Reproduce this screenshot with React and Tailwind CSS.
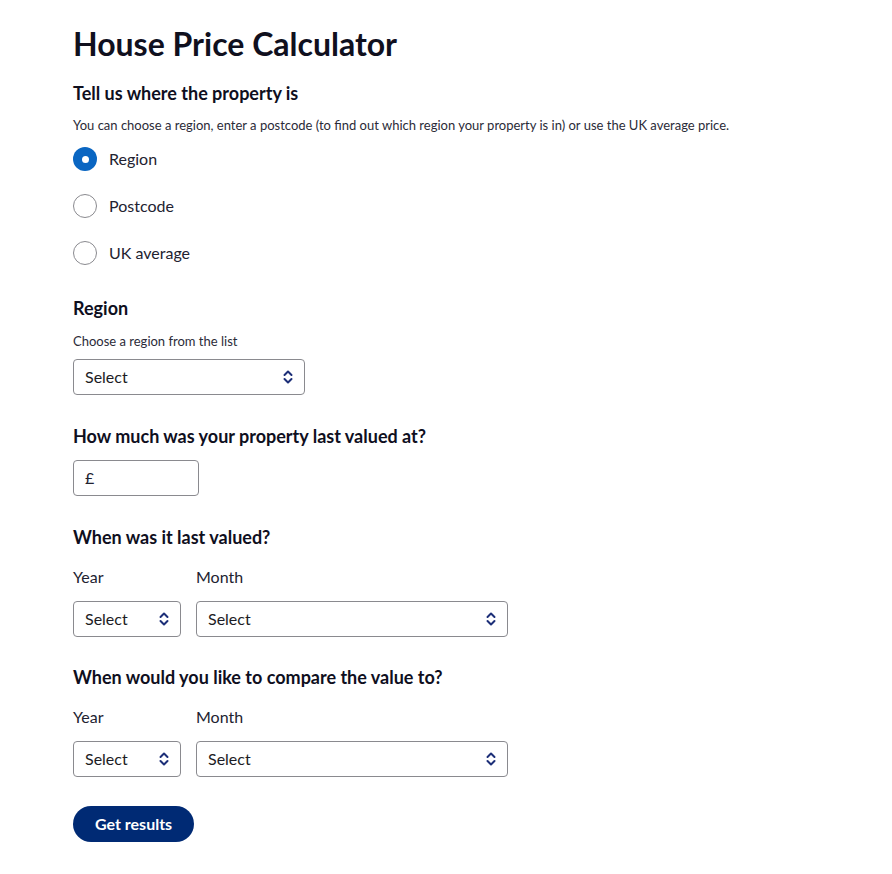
import React, { useState } from "react";

const Chevrons = () => (
  <svg width="12" height="16" viewBox="0 0 12 16" fill="none" className="shrink-0">
    <path d="M2.5 6L6 2.5L9.5 6" stroke="#1d2f78" strokeWidth="2" strokeLinecap="round" strokeLinejoin="round" />
    <path d="M2.5 10L6 13.5L9.5 10" stroke="#1d2f78" strokeWidth="2" strokeLinecap="round" strokeLinejoin="round" />
  </svg>
);

const SelectBox = ({ width }) => (
  <div
    className={`${width} h-9 flex items-center justify-between pl-[11px] pr-[10px] border border-[#8a8a8f] rounded-[4px] bg-white text-[16px] text-[#1c1c24]`}
  >
    <span>Select</span>
    <Chevrons />
  </div>
);

const Radio = ({ label, checked, onClick }) => (
  <button onClick={onClick} className="flex items-center gap-3 h-6 text-[16px] text-[#222230]">
    {checked ? (
      <span className="w-6 h-6 rounded-full bg-[#0a66c2] flex items-center justify-center">
        <span className="w-[7px] h-[7px] rounded-full bg-white" />
      </span>
    ) : (
      <span className="w-6 h-6 rounded-full border border-[#8a8a8f] bg-white" />
    )}
    <span>{label}</span>
  </button>
);

const DateRow = () => (
  <div className="flex gap-[15px] mt-[18px]">
    <div>
      <div className="text-[16px] text-[#222230] leading-5">Year</div>
      <div className="mt-[14px]">
        <SelectBox width="w-[108px]" />
      </div>
    </div>
    <div>
      <div className="text-[16px] text-[#222230] leading-5">Month</div>
      <div className="mt-[14px]">
        <SelectBox width="w-[312px]" />
      </div>
    </div>
  </div>
);

export default function App() {
  const [where, setWhere] = useState("region");

  return (
    <div className="min-h-screen bg-white font-['Lato',sans-serif] text-[#0f0f1e]">
      <div className="pl-[73px] pt-[24px] pb-8">
        {/* Title */}
        <h1 className="text-[32px] font-bold leading-10 text-[#10101e]">House Price Calculator</h1>

        {/* Where */}
        <h2 className="mt-[17px] text-[18px] font-bold leading-6">Tell us where the property is</h2>
        <p className="mt-[10px] text-[13px] text-[#2b2b38] leading-5">
          You can choose a region, enter a postcode (to find out which region your property is in) or use the UK average price.
        </p>

        <div className="mt-[12px] flex flex-col gap-[23px]">
          <Radio label="Region" checked={where === "region"} onClick={() => setWhere("region")} />
          <Radio label="Postcode" checked={where === "postcode"} onClick={() => setWhere("postcode")} />
          <Radio label="UK average" checked={where === "uk"} onClick={() => setWhere("uk")} />
        </div>

        {/* Region */}
        <h2 className="mt-[31px] text-[18px] font-bold leading-6">Region</h2>
        <p className="mt-[11px] text-[13px] text-[#2b2b38] leading-5">Choose a region from the list</p>
        <div className="mt-[8px]">
          <SelectBox width="w-[232px]" />
        </div>

        {/* Last valued */}
        <h2 className="mt-[29px] text-[18px] font-bold leading-6">How much was your property last valued at?</h2>
        <div className="mt-[12px] w-[126px] h-9 flex items-center pl-[11px] border border-[#8a8a8f] rounded-[4px] text-[16px] text-[#222230]">
          £
        </div>

        {/* When valued */}
        <h2 className="mt-[29px] text-[18px] font-bold leading-6">When was it last valued?</h2>
        <DateRow />

        {/* Compare */}
        <h2 className="mt-[28px] text-[18px] font-bold leading-6">When would you like to compare the value to?</h2>
        <DateRow />

        <button className="mt-[29px] h-9 px-[22px] rounded-full bg-[#002a74] text-white text-[16px] font-bold">
          Get results
        </button>
      </div>
    </div>
  );
}
